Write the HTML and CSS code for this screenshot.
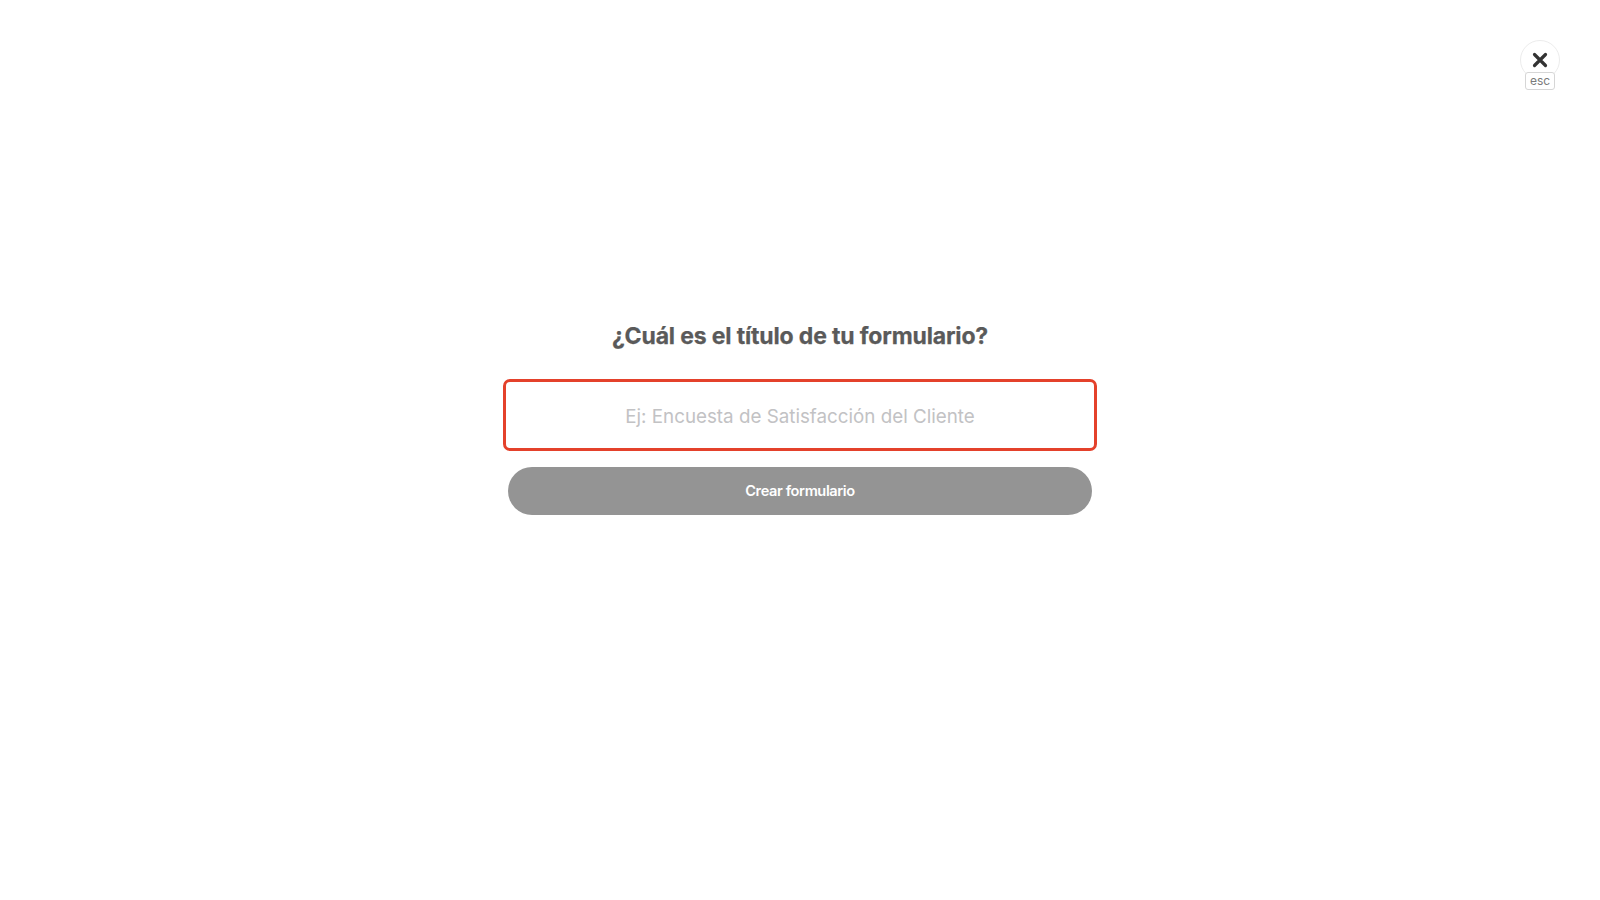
FILE: index.html
```html
<!DOCTYPE html>
<html lang="es">
<head>
<meta charset="utf-8">
<title>Nuevo formulario</title>
<link rel="stylesheet" href="styles.css">
</head>
<body>
<div class="page">
  <button class="close" type="button" aria-label="Cerrar">
    <span class="close-circle">
      <svg width="16" height="16" viewBox="0 0 16 16" aria-hidden="true"><path d="M2.5 2.5 L13.5 13.5 M13.5 2.5 L2.5 13.5" stroke="#333" stroke-width="3.2" stroke-linecap="round"/></svg>
    </span>
    <span class="esc">esc</span>
  </button>
  <main class="center">
    <h1 class="title">¿Cuál es el título de tu formulario?</h1>
    <div class="form">
      <input class="field" type="text" placeholder="Ej: Encuesta de Satisfacción del Cliente">
      <button class="submit" type="button">Crear formulario</button>
    </div>
  </main>
</div>
</body>
</html>
```

FILE: styles.css
```css
* { box-sizing: border-box; }
html, body { margin: 0; padding: 0; background: #fff; }
body { font-family: Inter, "Noto Sans", "Liberation Sans", sans-serif; width: 1600px; height: 900px; overflow: hidden; }
.page { position: relative; width: 1600px; height: 900px; }

.close {
  position: absolute;
  top: 40px;
  left: 1520px;
  width: 40px;
  padding: 0;
  border: 0;
  background: transparent;
  display: flex;
  flex-direction: column;
  align-items: center;
  cursor: pointer;
}
.close-circle {
  width: 40px;
  height: 40px;
  border-radius: 50%;
  border: 1px solid #ececec;
  display: flex;
  align-items: center;
  justify-content: center;
}
.esc {
  margin-top: -8px;
  width: 30px;
  height: 18px;
  border: 1px solid #d6d6d6;
  border-radius: 3px;
  background: #fff;
  font-family: Inter, "Liberation Sans", sans-serif;
  font-size: 12px;
  line-height: 16px;
  color: #7a7a7a;
  text-align: center;
}

.center {
  display: flex;
  flex-direction: column;
  align-items: center;
  padding-top: 321px;
}
.title {
  margin: 0;
  font-size: 23px;
  line-height: 30px;
  font-weight: 700;
  color: #5a5a5a;
  letter-spacing: -0.15px;
  -webkit-text-stroke: 0.25px #5a5a5a;
}
.form {
  margin-top: 28px;
  width: 594px;
  display: flex;
  flex-direction: column;
  align-items: center;
  gap: 16px;
}
.field {
  width: 594px;
  height: 72px;
  border: 3px solid #e4412b;
  border-radius: 7px;
  outline: none;
  text-align: center;
  font-family: Inter, "Liberation Sans", sans-serif;
  font-size: 18.8px;
  padding-top: 3px;
  color: #333;
  background: #fff;
}
.field::placeholder { color: #c2c2c4; }
.submit {
  width: 584px;
  height: 48px;
  border: 0;
  border-radius: 24px;
  background: #949494;
  color: #fff;
  font-family: Inter, "Liberation Sans", sans-serif;
  font-size: 14.6px;
  font-weight: 600;
  letter-spacing: -0.4px;
  cursor: pointer;
}
```
